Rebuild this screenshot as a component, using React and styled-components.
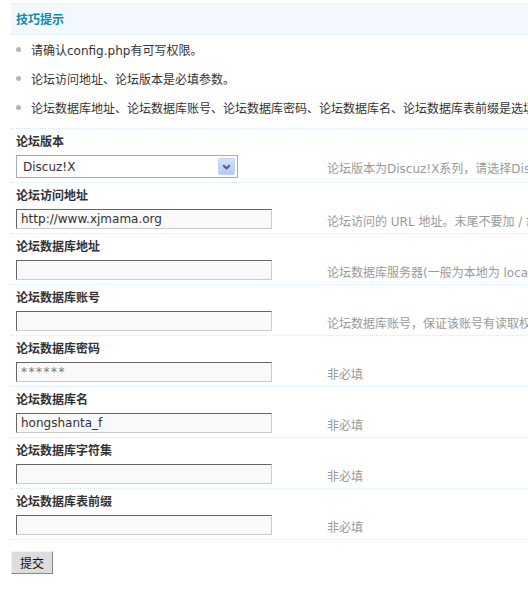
import React from "react";
import styled, { createGlobalStyle } from "styled-components";

const GlobalStyle = createGlobalStyle`
  html, body {
    margin: 0;
    padding: 0;
    background: #fff;
    overflow: hidden;
  }
  body {
    font-family: "DejaVu Sans", "Noto Sans CJK SC", sans-serif;
    font-size: 12px;
    color: #333;
  }
`;

const tips = [
  "请确认config.php有可写权限。",
  "论坛访问地址、论坛版本是必填参数。",
  "论坛数据库地址、论坛数据库账号、论坛数据库密码、论坛数据库名、论坛数据库表前缀是选填参数。",
];

const fields = [
  { label: "论坛访问地址", value: "http://www.xjmama.org", tip: "论坛访问的 URL 地址。末尾不要加 / 斜杠" },
  { label: "论坛数据库地址", value: "", tip: "论坛数据库服务器(一般为本地为 localhost)" },
  { label: "论坛数据库账号", value: "", tip: "论坛数据库账号，保证该账号有读取权限" },
  { label: "论坛数据库密码", value: "******", tip: "非必填", muted: true },
  { label: "论坛数据库名", value: "hongshanta_f", tip: "非必填" },
  { label: "论坛数据库字符集", value: "", tip: "非必填" },
  { label: "论坛数据库表前缀", value: "", tip: "非必填" },
];

export default function App() {
  return (
    <>
      <GlobalStyle />
      <Page>
        <TipsHead>技巧提示</TipsHead>
        <TipsList>
          {tips.map((t) => (
            <Tip key={t}>
              <Dot />
              {t}
            </Tip>
          ))}
        </TipsList>

        <Row>
          <Label>论坛版本</Label>
          <Field>
            <Select>
              <span>Discuz!X</span>
              <DropButton>
                <svg width="9" height="6" viewBox="0 0 9 6">
                  <path d="M1.2 1.2 L4.5 4.4 L7.8 1.2" fill="none" stroke="#4a5f86" strokeWidth="2" />
                </svg>
              </DropButton>
            </Select>
            <Desc>论坛版本为Discuz!X系列，请选择Discuz!X</Desc>
          </Field>
        </Row>

        {fields.map((f) => (
          <Row key={f.label}>
            <Label>{f.label}</Label>
            <Field>
              <Input type="text" defaultValue={f.value} $muted={f.muted} />
              <Desc>{f.tip}</Desc>
            </Field>
          </Row>
        ))}

        <Footer>
          <Submit type="button">提交</Submit>
        </Footer>
      </Page>
    </>
  );
}

const Page = styled.div`
  width: 900px;
  padding: 3px 0 0 11px;
`;

const TipsHead = styled.div`
  height: 30px;
  line-height: 30px;
  padding-left: 5px;
  background: #f2f8fd;
  border-top: 1px dotted #e3eef7;
  border-bottom: 1px dotted #d9e9f5;
  color: #1289ad;
  font-weight: 700;
  font-family: "Noto Sans CJK SC", sans-serif;
`;

const TipsList = styled.ul`
  list-style: none;
  margin: 0;
  padding: 0 0 6px;
`;

const Tip = styled.li`
  display: flex;
  align-items: center;
  height: 29px;
  white-space: nowrap;
  color: #333;
`;

const Dot = styled.span`
  width: 5px;
  height: 5px;
  border-radius: 50%;
  background: #b5b5b5;
  margin: 0 10px 0 5px;
  flex: none;
`;

const Row = styled.div`
  border-top: 1px dotted #d6e7f3;
  padding-bottom: 4px;
`;

const Label = styled.div`
  padding: 3px 0 0 5px;
  line-height: 18px;
  font-weight: 700;
  color: #333;
  font-family: "Noto Sans CJK SC", sans-serif;
`;

const Field = styled.div`
  display: grid;
  grid-template-columns: 316px 1fr;
  align-items: center;
  margin-top: 5px;
`;

const Input = styled.input`
  box-sizing: border-box;
  width: 256px;
  height: 20px;
  margin: 0 0 0 5px;
  padding: 0 4px;
  border: 1px solid #ccc;
  border-top-color: #666;
  border-left-color: #666;
  background: #f9f9f9;
  color: ${(p) => (p.$muted ? "#777" : "#333")};
  letter-spacing: ${(p) => (p.$muted ? "1.5px" : "0")};
  font: 12px "DejaVu Sans", sans-serif;
  outline: none;
`;

const Select = styled.div`
  box-sizing: border-box;
  width: 222px;
  height: 23px;
  margin-left: 5px;
  border: 1px solid #a5acb2;
  background: #fff;
  display: flex;
  align-items: center;
  justify-content: space-between;
  padding: 0 2px 0 6px;
  color: #333;
`;

const DropButton = styled.span`
  box-sizing: border-box;
  width: 17px;
  height: 17px;
  border: 1px solid #c3d3fb;
  border-radius: 2px;
  background: linear-gradient(#d6e2fc, #b6c8f3);
  display: flex;
  align-items: center;
  justify-content: center;
`;

const Desc = styled.div`
  color: #999;
  white-space: nowrap;
  padding-top: 2px;
`;

const Footer = styled.div`
  border-top: 1px dotted #d6e7f3;
  padding-top: 11px;
`;

const Submit = styled.button`
  width: 42px;
  height: 23px;
  padding: 0;
  background: #ddd;
  border: 1px solid #888;
  border-top-color: #f2f2f2;
  border-left-color: #f2f2f2;
  color: #111;
  font: 12px "Noto Sans CJK SC", sans-serif;
`;
